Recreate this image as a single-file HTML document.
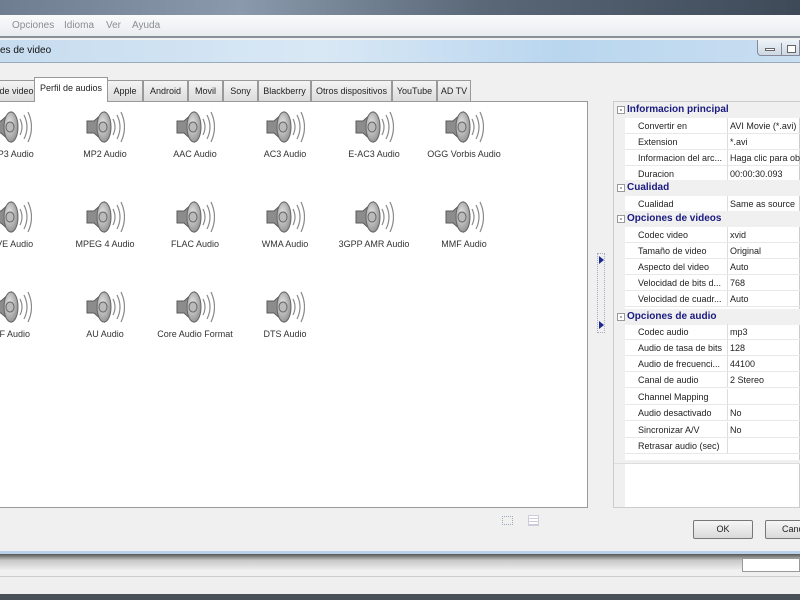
<!DOCTYPE html>
<html><head><style>
*{margin:0;padding:0;box-sizing:border-box}
body{width:800px;height:600px;overflow:hidden;background:#f0f0f0;font-family:"Liberation Sans",Arial,sans-serif;font-size:9px;color:#222;position:relative}
.a{position:absolute}
.tab{position:absolute;top:80px;height:21px;border:1px solid #999;border-bottom:none;background:linear-gradient(#f4f4f4,#dcdcdc);font-size:9px;text-align:center;line-height:20px}
.it{position:absolute;width:90px;text-align:center;font-size:9px;color:#333}
.it svg{display:block;margin:0 auto 4px}
.pg{position:absolute;left:613px;top:101px;width:187px;height:407px;background:#fff;border:1px solid #ccc}
.r{position:absolute;left:0;width:187px;height:16px;font-size:9px;line-height:16px}
.r .n{position:absolute;left:11px;width:103px;height:16px;padding-left:13px;border-bottom:1px solid #e8e8e8;border-right:1px solid #ddd}
.r .v{position:absolute;left:114px;width:80px;padding-left:2px;height:16px;border-bottom:1px solid #e8e8e8;white-space:nowrap;overflow:hidden}
.r.h{background:#f0f0f0;font-weight:bold;color:#1a1a80;font-size:10px}
.r.h span{position:absolute;left:13px}
.r.h i{position:absolute;left:3px;top:4px;width:8px;height:8px;border:1px solid #999;background:#fff;font-style:normal;font-size:8px;line-height:5px;text-align:center;color:#555}
.gut{position:absolute;left:0;top:0;width:11px;height:100%;background:#f0f0f0}
</style></head><body>
<div class="a" style="left:0;top:0;width:800px;height:15px;background:linear-gradient(90deg,#6e7e90,#8a9aac 30%,#5a6878 60%,#3e4a58)"></div>
<div class="a" style="left:0;top:15px;width:800px;height:23px;background:linear-gradient(#fafafa,#e9ecef);border-bottom:2px solid #8a9098;font-size:10px;color:#8a8e94;line-height:22px">
<span class="a" style="left:12px">Opciones</span><span class="a" style="left:64px">Idioma</span><span class="a" style="left:106px">Ver</span><span class="a" style="left:132px">Ayuda</span></div>
<div class="a" style="left:0;top:40px;width:800px;height:23px;background:linear-gradient(90deg,#c6dcef,#d9e8f5 40%,#b9d6ef 70%,#c9def0);border-bottom:1px solid #9ab"></div>
<div class="a" style="left:0;top:45px;font-size:10px;color:#111">es de video</div>
<div class="a" style="left:757px;top:40px;width:43px;height:16px;background:linear-gradient(#eef3f8,#cdd8e3);border:1px solid #889;border-top:none;border-radius:0 0 0 4px"></div>
<div class="a" style="left:765px;top:48px;width:10px;height:3px;background:#fff;border:1px solid #666"></div>
<div class="a" style="left:781px;top:43px;width:1px;height:13px;background:#889"></div>
<div class="a" style="left:787px;top:45px;width:9px;height:8px;border:1px solid #666;background:#fff"></div>
<div class="tab" style="left:-2px;width:37px">de video</div>
<div class="tab" style="left:34px;width:74px;top:77px;height:25px;background:#fff;z-index:2">Perfil de audios</div>
<div class="tab" style="left:107px;width:36px">Apple</div>
<div class="tab" style="left:143px;width:45px">Android</div>
<div class="tab" style="left:188px;width:35px">Movil</div>
<div class="tab" style="left:223px;width:35px">Sony</div>
<div class="tab" style="left:258px;width:53px">Blackberry</div>
<div class="tab" style="left:311px;width:81px">Otros dispositivos</div>
<div class="tab" style="left:392px;width:45px">YouTube</div>
<div class="tab" style="left:437px;width:34px">AD TV</div>
<div class="a" style="left:0;top:101px;width:588px;height:407px;background:#fff;border:1px solid #999;border-left:none"></div>
<svg width="0" height="0" style="position:absolute"><defs>
<radialGradient id="cg" cx="0.4" cy="0.4" r="0.7"><stop offset="0" stop-color="#e8e8e8"/><stop offset="1" stop-color="#8a8a8a"/></radialGradient>
<g id="spk"><path d="M2 12h7l10-9v30l-10-9H2z" fill="#8c8c8c" stroke="#5a5a5a" stroke-width="1"/><ellipse cx="19" cy="18" rx="7" ry="15" fill="url(#cg)" stroke="#666"/><ellipse cx="18" cy="18" rx="4" ry="5" fill="#bbb" stroke="#666"/><path d="M28 10q4 8 0 16M32 6q6 12 0 24M36 3q7 15 0 30" fill="none" stroke="#8a8a8a" stroke-width="1.2"/></g></defs></svg>
<div class="it" style="left:-33px;top:109px"><svg width="40" height="36"><use href="#spk"/></svg>MP3 Audio</div>
<div class="it" style="left:60px;top:109px"><svg width="40" height="36"><use href="#spk"/></svg>MP2 Audio</div>
<div class="it" style="left:150px;top:109px"><svg width="40" height="36"><use href="#spk"/></svg>AAC Audio</div>
<div class="it" style="left:240px;top:109px"><svg width="40" height="36"><use href="#spk"/></svg>AC3 Audio</div>
<div class="it" style="left:329px;top:109px"><svg width="40" height="36"><use href="#spk"/></svg>E-AC3 Audio</div>
<div class="it" style="left:419px;top:109px"><svg width="40" height="36"><use href="#spk"/></svg>OGG Vorbis Audio</div>
<div class="it" style="left:-33px;top:199px"><svg width="40" height="36"><use href="#spk"/></svg>AVE Audio</div>
<div class="it" style="left:60px;top:199px"><svg width="40" height="36"><use href="#spk"/></svg>MPEG 4 Audio</div>
<div class="it" style="left:150px;top:199px"><svg width="40" height="36"><use href="#spk"/></svg>FLAC Audio</div>
<div class="it" style="left:240px;top:199px"><svg width="40" height="36"><use href="#spk"/></svg>WMA Audio</div>
<div class="it" style="left:329px;top:199px"><svg width="40" height="36"><use href="#spk"/></svg>3GPP AMR Audio</div>
<div class="it" style="left:419px;top:199px"><svg width="40" height="36"><use href="#spk"/></svg>MMF Audio</div>
<div class="it" style="left:-33px;top:289px"><svg width="40" height="36"><use href="#spk"/></svg>FF Audio</div>
<div class="it" style="left:60px;top:289px"><svg width="40" height="36"><use href="#spk"/></svg>AU Audio</div>
<div class="it" style="left:150px;top:289px"><svg width="40" height="36"><use href="#spk"/></svg>Core Audio Format</div>
<div class="it" style="left:240px;top:289px"><svg width="40" height="36"><use href="#spk"/></svg>DTS Audio</div>
<div class="a" style="left:597px;top:253px;width:8px;height:80px;border:1px dotted #aab"></div>
<div class="a" style="left:599px;top:256px;border-left:5px solid #1a2a90;border-top:4px solid transparent;border-bottom:4px solid transparent"></div>
<div class="a" style="left:599px;top:321px;border-left:5px solid #1a2a90;border-top:4px solid transparent;border-bottom:4px solid transparent"></div>
<div class="a" style="left:502px;top:516px;width:11px;height:9px;border:1px dotted #9ab"></div>
<div class="a" style="left:528px;top:515px;width:11px;height:11px;border:1px solid #ccd;background:repeating-linear-gradient(#fff 0 2px,#ccd 2px 3px)"></div>
<div class="pg"><div class="gut"></div>
<div class="r h" style="top:0"><i>-</i><span>Informacion principal</span></div>
<div class="r" style="top:16px"><div class="n">Convertir en</div><div class="v">AVI Movie (*.avi)</div></div>
<div class="r" style="top:32px"><div class="n">Extension</div><div class="v">*.avi</div></div>
<div class="r" style="top:48px"><div class="n">Informacion del arc...</div><div class="v">Haga clic para obt</div></div>
<div class="r" style="top:64px"><div class="n">Duracion</div><div class="v">00:00:30.093</div></div>
<div class="r h" style="top:78px"><i>-</i><span>Cualidad</span></div>
<div class="r" style="top:94px"><div class="n">Cualidad</div><div class="v">Same as source</div></div>
<div class="r h" style="top:109px"><i>-</i><span>Opciones de videos</span></div>
<div class="r" style="top:125px"><div class="n">Codec video</div><div class="v">xvid</div></div>
<div class="r" style="top:141px"><div class="n">Tamaño de video</div><div class="v">Original</div></div>
<div class="r" style="top:157px"><div class="n">Aspecto del video</div><div class="v">Auto</div></div>
<div class="r" style="top:173px"><div class="n">Velocidad de bits d...</div><div class="v">768</div></div>
<div class="r" style="top:189px"><div class="n">Velocidad de cuadr...</div><div class="v">Auto</div></div>
<div class="r h" style="top:207px"><i>-</i><span>Opciones de audio</span></div>
<div class="r" style="top:222px"><div class="n">Codec audio</div><div class="v">mp3</div></div>
<div class="r" style="top:238px"><div class="n">Audio de tasa de bits</div><div class="v">128</div></div>
<div class="r" style="top:254px"><div class="n">Audio de frecuenci...</div><div class="v">44100</div></div>
<div class="r" style="top:270px"><div class="n">Canal de audio</div><div class="v">2 Stereo</div></div>
<div class="r" style="top:287px"><div class="n">Channel Mapping</div><div class="v"></div></div>
<div class="r" style="top:303px"><div class="n">Audio desactivado</div><div class="v">No</div></div>
<div class="r" style="top:320px"><div class="n">Sincronizar A/V</div><div class="v">No</div></div>
<div class="r" style="top:336px"><div class="n">Retrasar audio (sec)</div><div class="v"></div></div>
<div class="a" style="left:0;top:358px;width:187px;height:4px;background:#f0f0f0;border-bottom:1px solid #ddd"></div>
</div>
<div class="a" style="left:693px;top:520px;width:60px;height:19px;border:1px solid #777;border-radius:2px;background:linear-gradient(#f6f6f6,#dadada);text-align:center;line-height:17px;font-size:9px">OK</div>
<div class="a" style="left:765px;top:520px;width:60px;height:19px;border:1px solid #777;border-radius:2px;background:linear-gradient(#f6f6f6,#dadada);line-height:17px;font-size:9px;padding-left:16px">Cancelar</div>
<div class="a" style="left:0;top:551px;width:800px;height:3px;background:#b8d0e8"></div>
<div class="a" style="left:0;top:554px;width:800px;height:16px;background:linear-gradient(#555,#c8c8c8 40%,#eee)"></div>
<div class="a" style="left:742px;top:558px;width:58px;height:14px;background:#fff;border:1px solid #999"></div>
<div class="a" style="left:0;top:576px;width:800px;height:18px;background:#efefef;border-top:1px solid #ccc"></div>
<div class="a" style="left:0;top:594px;width:800px;height:6px;background:#4a5058"></div>
</body></html>
